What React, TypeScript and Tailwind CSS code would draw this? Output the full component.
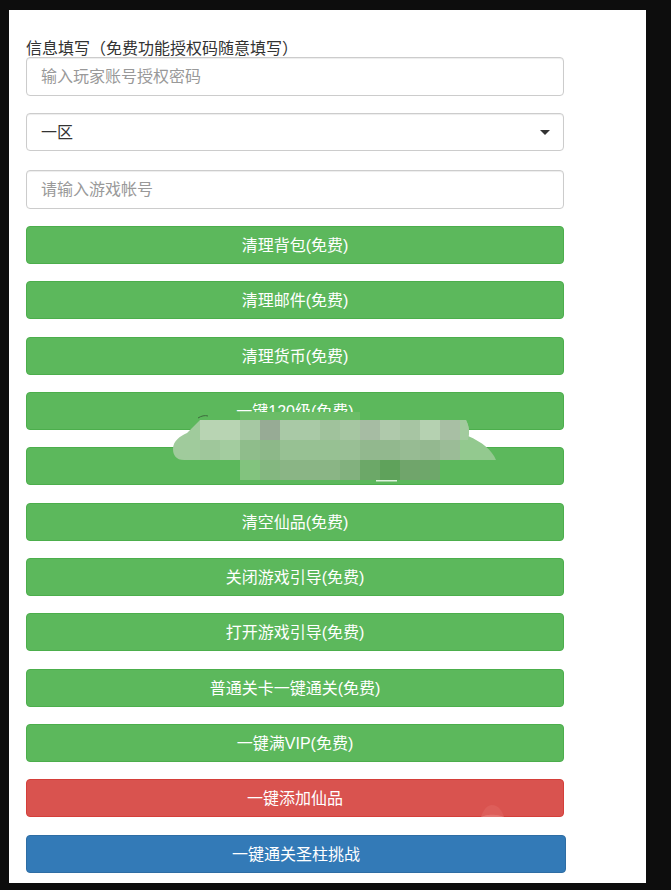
const font = "font-['Liberation_Sans','Noto_Sans_CJK_SC',sans-serif]"

const greenButtons = [
  { text: "清理背包(免费)", mt: "mt-[17px]" },
  { text: "清理邮件(免费)", mt: "mt-[17px]" },
  { text: "清理货币(免费)", mt: "mt-[18px]" },
  { text: "一键120级(免费)", mt: "mt-[17px]" },
  { text: "", mt: "mt-[17px]" },
  { text: "清空仙品(免费)", mt: "mt-[18px]" },
  { text: "关闭游戏引导(免费)", mt: "mt-[17px]" },
  { text: "打开游戏引导(免费)", mt: "mt-[17px]" },
  { text: "普通关卡一键通关(免费)", mt: "mt-[18px]" },
  { text: "一键满VIP(免费)", mt: "mt-[17px]" },
]

// 打码色块，每格 20px，从 x=200 / x=240 开始
const row1 = ["#b8d4b3", "#b8d4b3", "#a6c8a3", "#97ab95", "#a9c9a6", "#a9c9a6", "#a0c29c", "#a6c6a2", "#a6bca3", "#afc9ab", "#a7c5a3", "#b5d1b1", "#a8bfa4"]
const row2 = ["#9fc79b", "#a3cc9f", "#8fbd8b", "#8db889", "#97c193", "#97c193", "#97c193", "#99bf95", "#92b88e", "#92b88e", "#97bb93", "#94b890", "#9bbc97"]
const row3 = ["#82c37e", "#84b780", "#8ab585", "#8ab585", "#8ab585", "#82b17e", "#6ca868", "#5fa25b", "#70a56b", "#6ea76a"]

export default function App() {
  return (
    <div className={`relative h-[890px] w-[671px] overflow-hidden bg-[#0d0d0d] pl-[9px] pt-[10px] ${font}`}>
      <div className="h-[873px] w-[637px] bg-white pl-[17px] pt-[30px]">
        <div className="h-[17px] text-[16px] leading-[17px] text-[#333]">信息填写（免费功能授权码随意填写）</div>

        <input
          readOnly
          placeholder="输入玩家账号授权密码"
          className="block h-[39px] w-[538px] rounded border border-[#ccc] bg-white px-[14px] text-[16px] shadow-[inset_0_1px_1px_rgba(0,0,0,0.075)] placeholder:text-[#999]"
        />

        <div className="mt-[17px] flex h-[38px] w-[538px] items-center justify-between rounded border border-[#ccc] bg-white pl-[14px] pr-[13px] text-[16px] text-[#333] shadow-[inset_0_1px_1px_rgba(0,0,0,0.075)]">
          <span className="pt-[1px]">一区</span>
          <span className="h-0 w-0 border-x-[5px] border-t-[5px] border-x-transparent border-t-[#333]" />
        </div>

        <input
          readOnly
          placeholder="请输入游戏帐号"
          className="mt-[19px] block h-[39px] w-[538px] rounded border border-[#ccc] bg-white px-[14px] text-[16px] shadow-[inset_0_1px_1px_rgba(0,0,0,0.075)] placeholder:text-[#999]"
        />

        {greenButtons.map((b, i) => (
          <button
            key={i}
            className={`${b.mt} block h-[38px] w-[538px] rounded border border-[#4cae4c] bg-[#5cb85c] pt-[2px] text-[16px] text-white`}
          >
            {b.text}
          </button>
        ))}

        <button className="mt-[17px] block h-[38px] w-[538px] rounded border border-[#d43f3a] bg-[#d9534f] pt-[2px] text-[16px] text-white">
          一键添加仙品
        </button>
        <button className="mt-[18px] block h-[38px] w-[540px] rounded border border-[#2e6da4] bg-[#337ab7] pt-[2px] text-[16px] text-white">
          一键通关圣柱挑战
        </button>
      </div>

      {/* 打码区域 */}
      <svg className="absolute left-0 top-0" width="671" height="890" viewBox="0 0 671 890">
        <path d="M481 817 C483 810 487 805 492 805 C498 805 502 810 504 817 Z" fill="#dd5e5a" />
        <path d="M482 817 C484 814 500 814 503 817 Z" fill="#e47470" />
        <rect x="240" y="412" width="120" height="8" fill="#6bbd67" />
        <path d="M200 420 L200 460 L184 460 C176 460 173 455 173 449 C173 441 180 436 187 433 Z" fill="#a0cb9c" />
        <path d="M460 420 L466 420 C469 426 470 432 468 436 C482 442 492 450 496 460 L460 460 Z" fill="#93c98f" />
        <path d="M460 420 L466 420 C469 426 470 432 468 440 L460 440 Z" fill="#a2cb9e" />
        <path d="M198 418 C201 416 205 415 208 416" stroke="#3d6b3d" strokeWidth="1" fill="none" />
        {row1.map((c, i) => (
          <rect key={i} x={200 + i * 20} y={420} width="20" height="20" fill={c} />
        ))}
        {row2.map((c, i) => (
          <rect key={i} x={200 + i * 20} y={440} width="20" height="20" fill={c} />
        ))}
        {row3.map((c, i) => (
          <rect key={i} x={240 + i * 20} y={460} width="20" height="20" fill={c} />
        ))}
        <rect x="376" y="480" width="21" height="1.5" fill="#dff2de" />
      </svg>
    </div>
  )
}
